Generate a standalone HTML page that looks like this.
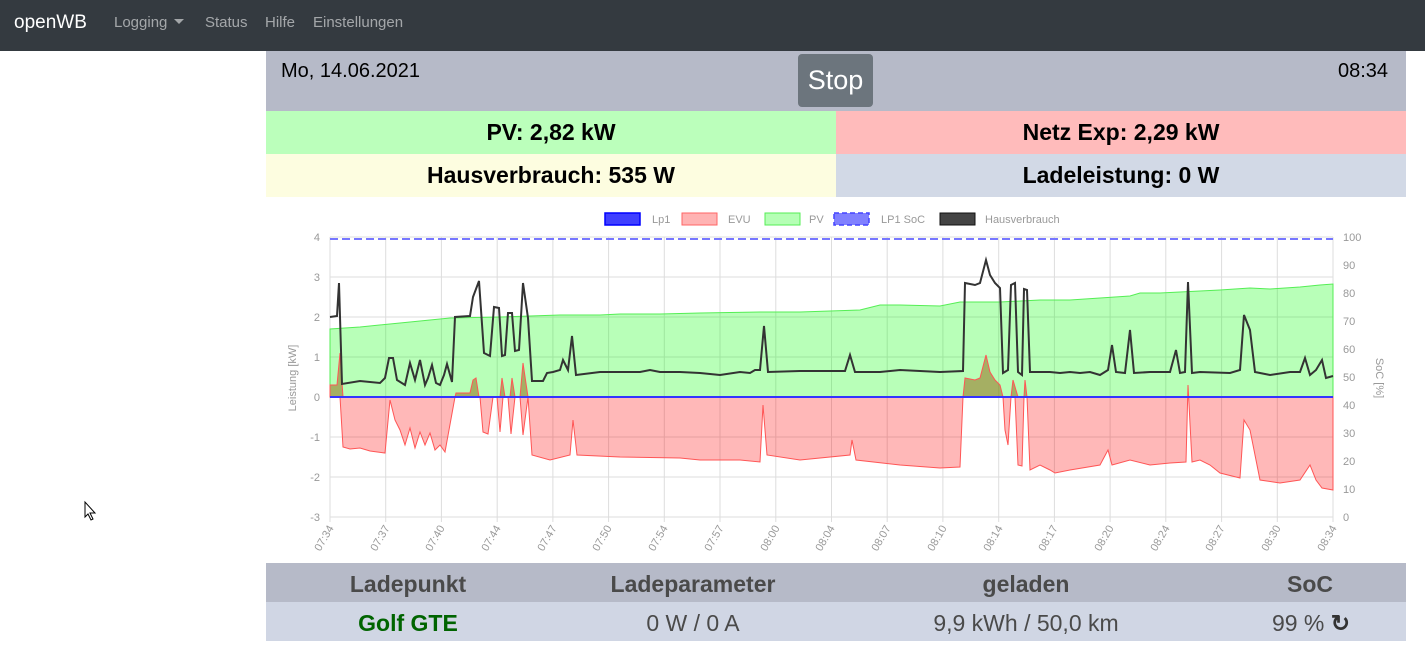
<!DOCTYPE html>
<html><head><meta charset="utf-8"><style>
body{margin:0;width:1425px;height:671px;background:#fff;font-family:"Liberation Sans",sans-serif;position:relative;overflow:hidden}
.nav{position:absolute;left:0;top:0;width:1425px;height:51px;background:#343a40}
.nav span{position:absolute;top:14px;font-size:15px;color:rgba(255,255,255,.55)}
.abs{position:absolute}
.box{position:absolute;display:flex;align-items:center;justify-content:center;font-weight:bold;font-size:23px;color:#000}
.tc{position:absolute;text-align:center;font-size:23px}
</style></head><body>
<div class="nav">
<span style="left:14px;top:12px;font-size:19px;color:#fff">openWB</span>
<span style="left:114px">Logging <span style="position:relative;top:-3px;left:2px;display:inline-block;border-left:5px solid transparent;border-right:5px solid transparent;border-top:5px solid rgba(255,255,255,.55)"></span></span>
<span style="left:205px">Status</span>
<span style="left:265px">Hilfe</span>
<span style="left:313px">Einstellungen</span>
</div>
<div class="abs" style="left:266px;top:51px;width:1140px;height:60px;background:#b6bac8"></div>
<div class="abs" style="left:281px;top:60px;font-size:20px;color:#000">Mo, 14.06.2021</div>
<div class="abs" style="left:1338px;top:60px;font-size:20px;color:#000">08:34</div>
<div class="abs" style="left:798px;top:54px;width:75px;height:53px;background:#6c757d;border-radius:4px;color:#fff;font-size:27px;text-align:center;line-height:53px">Stop</div>
<div class="box" style="left:266px;top:111px;width:570px;height:43px;background:#bbffbb">PV: 2,82 kW</div>
<div class="box" style="left:836px;top:111px;width:570px;height:43px;background:#ffbbbb">Netz Exp: 2,29 kW</div>
<div class="box" style="left:266px;top:154px;width:570px;height:43px;background:#fdfde0">Hausverbrauch: 535 W</div>
<div class="box" style="left:836px;top:154px;width:570px;height:43px;background:#d2d9e6">Ladeleistung: 0 W</div>

<svg class="abs" style="left:0;top:0" width="1425" height="671" font-family="Liberation Sans, sans-serif" font-size="11" fill="#999">
<g stroke="#ddd" stroke-width="1">
<line x1="330" y1="237" x2="1333" y2="237"/><line x1="330" y1="277" x2="1333" y2="277"/><line x1="330" y1="317" x2="1333" y2="317"/><line x1="330" y1="357" x2="1333" y2="357"/><line x1="330" y1="437" x2="1333" y2="437"/><line x1="330" y1="477" x2="1333" y2="477"/><line x1="330" y1="517" x2="1333" y2="517"/>
<line x1="330" y1="237" x2="330" y2="522"/><line x1="385.7" y1="237" x2="385.7" y2="522"/><line x1="441.4" y1="237" x2="441.4" y2="522"/><line x1="497.2" y1="237" x2="497.2" y2="522"/><line x1="552.9" y1="237" x2="552.9" y2="522"/><line x1="608.6" y1="237" x2="608.6" y2="522"/><line x1="664.3" y1="237" x2="664.3" y2="522"/><line x1="720" y1="237" x2="720" y2="522"/><line x1="775.8" y1="237" x2="775.8" y2="522"/><line x1="831.5" y1="237" x2="831.5" y2="522"/><line x1="887.2" y1="237" x2="887.2" y2="522"/><line x1="942.9" y1="237" x2="942.9" y2="522"/><line x1="998.7" y1="237" x2="998.7" y2="522"/><line x1="1054.4" y1="237" x2="1054.4" y2="522"/><line x1="1110.1" y1="237" x2="1110.1" y2="522"/><line x1="1165.8" y1="237" x2="1165.8" y2="522"/><line x1="1221.6" y1="237" x2="1221.6" y2="522"/><line x1="1277.3" y1="237" x2="1277.3" y2="522"/><line x1="1333" y1="237" x2="1333" y2="522"/>
</g>
<path d="M330,397 L330,329 360,327 400,323 450,318 500,317 530,316 560,315 600,315 620,314 660,314 700,313 760,312 800,312 860,310 880,305 900,305 940,306 960,302 1000,302 1040,300 1070,300 1100,298 1130,296 1140,293 1160,293 1200,291 1220,290 1250,288 1270,289 1300,287 1320,285 1333,284 L1333,397Z" fill="rgba(0,255,0,.28)" stroke="#5e5" stroke-width="1"/>
<path d="M330,397 340,397 343,447 350,449 360,448 370,451 385,453 390,400 395,420 400,430 405,445 410,428 415,448 420,432 425,445 430,433 435,450 440,445 445,452 455,397 480,397 483,432 488,434 493,397 497,397 500,432 503,397 508,397 511,434 515,397 520,397 523,435 528,397 532,455 550,460 570,455 573,420 577,455 620,457 680,458 700,460 740,460 760,462 763,405 767,455 800,460 850,455 852,440 856,460 900,465 940,468 960,467 963,397 1003,397 1005,430 1008,445 1011,397 1015,397 1018,465 1022,466 1024,397 1027,397 1030,470 1040,465 1050,470 1055,473 1070,470 1100,465 1108,450 1112,465 1130,460 1150,465 1170,463 1186,462 1188,385 1192,462 1200,460 1210,465 1220,473 1240,478 1244,420 1250,430 1260,480 1280,483 1300,480 1310,465 1316,480 1322,488 1333,490 1333,397Z" fill="rgba(255,0,0,.28)" stroke="#f55" stroke-width="1"/>
<path d="M330,397 330,385 337,385 340,353 343,397Z M455,397 456,393 470,393 473,380 476,378 479,397Z M500,397 502,378 505,397Z M510,397 512,378 515,397Z M520,397 523,363 528,397Z M963,397 965,378 975,380 980,378 986,355 990,372 995,380 1000,385 1003,397Z M1011,397 1013,380 1018,397Z M1024,397 1025,380 1027,397Z" fill="rgba(150,110,30,.55)" stroke="#f55" stroke-width="1"/>
<line x1="330" y1="397" x2="1333" y2="397" stroke="#33f" stroke-width="2"/>
<line x1="330" y1="239" x2="1333" y2="239" stroke="#77f" stroke-width="2" stroke-dasharray="8,4"/>
<polyline fill="none" stroke="#333" stroke-width="2" points="330,317 337,316 339,283 342,384 360,381 380,383 385,378 389,358 393,358 397,380 405,385 410,363 415,380 420,360 425,385 428,378 432,365 436,383 440,385 444,375 447,364 452,382 455,317 470,316 473,297 479,281 484,353 490,356 494,307 499,308 502,356 505,355 508,313 512,313 515,351 519,350 523,283 528,318 532,381 543,381 547,373 553,372 560,370 563,360 568,370 572,336 576,375 600,372 640,372 650,370 660,372 680,372 700,373 720,375 740,372 750,373 755,370 760,370 764,326 768,372 800,371 845,371 850,355 855,372 880,372 900,370 920,371 940,372 963,371 965,283 975,285 980,283 986,260 990,275 995,283 1000,288 1003,373 1008,370 1011,285 1015,283 1018,372 1022,375 1024,289 1027,290 1030,372 1040,372 1050,372 1060,373 1070,372 1080,373 1090,372 1100,375 1108,370 1112,345 1116,372 1125,373 1130,330 1134,373 1150,372 1160,372 1170,372 1176,350 1180,373 1185,372 1188,282 1192,373 1200,372 1230,373 1240,370 1244,315 1250,330 1255,372 1270,375 1290,372 1300,372 1305,358 1310,375 1316,370 1322,360 1326,378 1333,376"/>
<g text-anchor="end"><text x="320" y="241">4</text><text x="320" y="281">3</text><text x="320" y="321">2</text><text x="320" y="361">1</text><text x="320" y="401">0</text><text x="320" y="441">-1</text><text x="320" y="481">-2</text><text x="320" y="521">-3</text></g>
<g><text x="1343" y="241">100</text><text x="1343" y="269">90</text><text x="1343" y="297">80</text><text x="1343" y="325">70</text><text x="1343" y="353">60</text><text x="1343" y="381">50</text><text x="1343" y="409">40</text><text x="1343" y="437">30</text><text x="1343" y="465">20</text><text x="1343" y="493">10</text><text x="1343" y="521">0</text></g>
<text transform="translate(296,378) rotate(-90)" text-anchor="middle">Leistung [kW]</text>
<text transform="translate(1376,378) rotate(90)" text-anchor="middle">SoC [%]</text>
<g text-anchor="end">
<text transform="translate(334,528) rotate(-60)">07:34</text><text transform="translate(390,528) rotate(-60)">07:37</text><text transform="translate(445,528) rotate(-60)">07:40</text><text transform="translate(501,528) rotate(-60)">07:44</text><text transform="translate(557,528) rotate(-60)">07:47</text><text transform="translate(612,528) rotate(-60)">07:50</text><text transform="translate(668,528) rotate(-60)">07:54</text><text transform="translate(724,528) rotate(-60)">07:57</text><text transform="translate(780,528) rotate(-60)">08:00</text><text transform="translate(835,528) rotate(-60)">08:04</text><text transform="translate(891,528) rotate(-60)">08:07</text><text transform="translate(947,528) rotate(-60)">08:10</text><text transform="translate(1003,528) rotate(-60)">08:14</text><text transform="translate(1058,528) rotate(-60)">08:17</text><text transform="translate(1114,528) rotate(-60)">08:20</text><text transform="translate(1170,528) rotate(-60)">08:24</text><text transform="translate(1225,528) rotate(-60)">08:27</text><text transform="translate(1281,528) rotate(-60)">08:30</text><text transform="translate(1337,528) rotate(-60)">08:34</text>
</g>
<rect x="605" y="213" width="35" height="12" fill="rgba(0,0,255,.75)" stroke="#00f" stroke-width="1.5"/><text x="652" y="223">Lp1</text>
<rect x="682" y="213" width="35" height="12" fill="#ffb3b3" stroke="#f66"/><text x="728" y="223">EVU</text>
<rect x="765" y="213" width="35" height="12" fill="#b5ffb5" stroke="#5e5"/><text x="809" y="223">PV</text>
<rect x="834" y="213" width="35" height="12" fill="#8080ff" stroke="#44f" stroke-dasharray="5,3" stroke-width="1.5"/><text x="881" y="223">LP1 SoC</text>
<rect x="940" y="213" width="35" height="12" fill="#444" stroke="#111"/><text x="985" y="223">Hausverbrauch</text>
<path d="M85,502 L85,517 L88,514 L91,520 L93,519 L90,513 L95,513Z" fill="#fff" stroke="#000" stroke-width="1"/>
</svg>

<div class="abs" style="left:266px;top:563px;width:1140px;height:39px;background:#b6bac8"></div>
<div class="abs" style="left:266px;top:602px;width:1140px;height:39px;background:#d0d6e4"></div>
<div class="tc" style="left:308px;top:571px;width:200px;font-weight:bold;color:#4a4a4a">Ladepunkt</div>
<div class="tc" style="left:593px;top:571px;width:200px;font-weight:bold;color:#4a4a4a">Ladeparameter</div>
<div class="tc" style="left:926px;top:571px;width:200px;font-weight:bold;color:#4a4a4a">geladen</div>
<div class="tc" style="left:1210px;top:571px;width:200px;font-weight:bold;color:#4a4a4a">SoC</div>
<div class="tc" style="left:308px;top:610px;width:200px;font-weight:bold;color:#006400">Golf GTE</div>
<div class="tc" style="left:593px;top:610px;width:200px;color:#4a4a4a">0 W / 0 A</div>
<div class="tc" style="left:926px;top:610px;width:200px;color:#4a4a4a">9,9 kWh / 50,0 km</div>
<div class="tc" style="left:1211px;top:610px;width:200px;color:#4a4a4a">99 % <b style="color:#333">&#x21bb;</b></div>
</body></html>
